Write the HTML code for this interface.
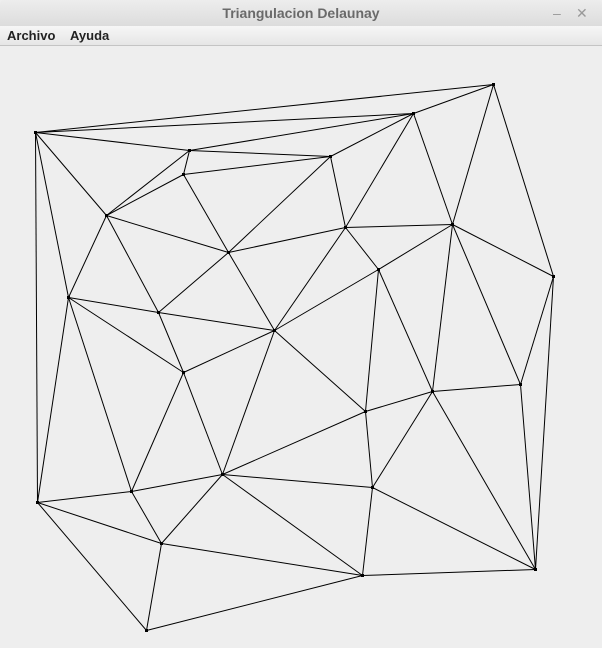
<!DOCTYPE html><html><head><style>
body{margin:0;width:602px;height:648px;background:#eeeeee;font-family:"Liberation Sans","DejaVu Sans",sans-serif;overflow:hidden;position:relative}
.t{position:absolute;left:0;top:0;width:602px;height:26px;background:linear-gradient(#ededed,#dcdcdc);color:#6a6a6a;font-weight:bold;font-size:14px;text-align:center;line-height:27px;border-radius:4px 4px 0 0}
.m{position:absolute;left:0;top:26px;width:602px;height:19px;background:linear-gradient(#f6f6f6,#e6e6e6);border-bottom:1px solid #c4c4c4;font-size:13px;font-weight:bold;color:#222;line-height:19px}
.m span{position:absolute;top:0}
</style></head><body>
<div class="t">Triangulacion Delaunay<span style="position:absolute;left:553px;top:0;color:#999;font-weight:normal">–</span><span style="position:absolute;left:576px;top:0;color:#999;font-weight:normal">✕</span></div>
<div class="m"><span style="left:7px">Archivo</span><span style="left:70px">Ayuda</span></div>
<svg width="602" height="648" style="position:absolute;left:0;top:0" stroke="#000" stroke-width="1" fill="#000">
<g id="e"></g>
</svg>
<script>
var P={A:[35,132],B:[493,84],C:[413,113],D:[189,150],E:[330,156],F:[183,174],G:[106,215],H:[228,252],I:[345,227],J:[452,224],K:[553,276],L:[68,297],M:[378,269],N:[158,312],O:[274,330],Pp:[183,372],Q:[520,384],R:[432,391],S:[365,411],T:[222,474],U:[131,491],V:[372,487],W:[37,502],X:[161,543],Y:[362,575],Z:[535,569],AA:[146,630]};
var E="A-B A-C A-D A-G A-L A-W B-C B-J B-K C-D C-E C-I C-J D-E D-F D-G F-G F-E F-H E-H E-I G-H G-N G-L H-I H-N H-O I-J I-M I-O J-M J-K J-R J-Q K-Q K-Z M-O M-S M-R L-N L-Pp L-U L-W N-Pp N-O O-Pp O-S O-T Pp-T Pp-U Q-R Q-Z R-S R-V R-Z S-V S-T T-V T-U T-X T-Y U-W U-X V-Y V-Z W-X W-AA X-Y X-AA Y-Z Y-AA".split(" ");
var s="";E.forEach(function(e){var a=P[e.split("-")[0]],b=P[e.split("-")[1]];s+='<line x1="'+(a[0]+.5)+'" y1="'+(a[1]+.5)+'" x2="'+(b[0]+.5)+'" y2="'+(b[1]+.5)+'"/>';});
for(var k in P)s+='<rect x="'+(P[k][0]-1)+'" y="'+(P[k][1]-1)+'" width="3" height="3" stroke="none"/>';
document.getElementById("e").innerHTML=s;
</script>
</body></html>
